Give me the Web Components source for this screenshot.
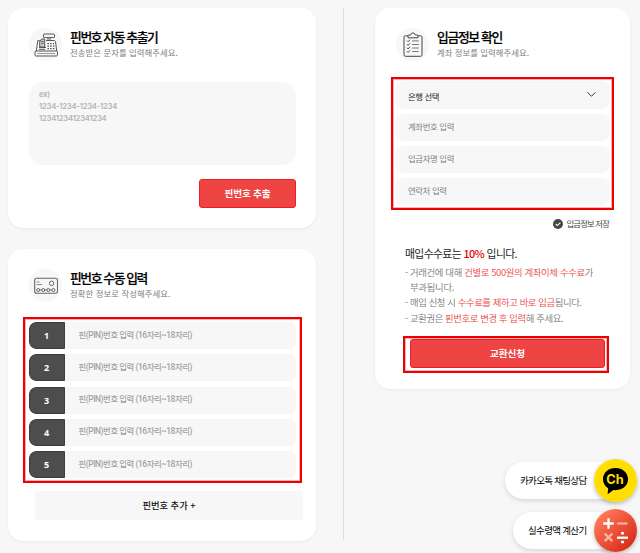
<!DOCTYPE html>
<html lang="ko">
<head>
<meta charset="utf-8">
<title>핀번호 교환</title>
<style>
html,body{margin:0;height:553px;overflow:hidden;background:#f7f7f7}
body{font-family:"Noto Sans CJK KR","Noto Sans",sans-serif;font-size:9px;color:#111}
</style>
</head>
<body>
<exchange-page></exchange-page>
<script>
const define = (name, html, setup) => {
  const tpl = document.createElement('template');
  tpl.innerHTML = html;
  customElements.define(name, class extends HTMLElement {
    connectedCallback() {
      if (this.shadowRoot) return;
      this.attachShadow({mode: 'open'}).append(tpl.content.cloneNode(true));
      if (setup) setup(this, this.shadowRoot);
    }
  });
};

/* Single line whose tracking is adjusted to span w pixels */
define('fit-text', `<style>:host{display:inline-block;white-space:nowrap;flex:none}</style><slot></slot>`, el => {
  const n = el.textContent.length;
  const natural = el.getBoundingClientRect().width;
  el.style.letterSpacing = ((+el.getAttribute('w') - natural) / n).toFixed(3) + 'px';
});

define('panel-card', `<style>
:host{display:block;box-sizing:border-box;background:#fff;border-radius:15px;padding:20px 20px 0 21px;box-shadow:0 1px 3px rgba(0,0,0,.06)}
</style><slot></slot>`);

define('card-head', `<style>
:host{display:flex;align-items:center;height:33px;gap:8px}
.ic{width:33px;height:33px;border-radius:50%;background:#f7f7f7;display:grid;place-items:center;flex:none}
.tx{display:flex;flex-direction:column;padding-bottom:2px}
.t{font-size:12.8px;font-weight:500;line-height:17px;height:17px;color:#000;-webkit-text-stroke:.2px #000}
.s{font-size:8.4px;line-height:14px;height:14px;color:#808080}
</style><div class="ic"><slot name="icon"></slot></div><div class="tx"><div class="t"><slot name="title"></slot></div><div class="s"><slot name="sub"></slot></div></div>`);

define('red-button', `<style>
:host{display:flex;align-items:center;justify-content:center;box-sizing:border-box;height:29px;padding-bottom:2px;border:1px solid #ec2024;border-radius:3px;background:#ef4444;color:#fff;font-size:9.6px;font-weight:700}
</style><slot></slot>`);

define('red-frame', `<style>
:host{display:flex;flex-direction:column;box-sizing:border-box;border:2px solid #ec0000;box-shadow:inset 0 0 0 1px rgba(236,0,0,.3)}
</style><slot></slot>`);

define('pin-row', `<style>
:host{display:flex;height:27px;border-radius:7px;overflow:hidden;background:#f7f7f7;flex:none}
.n{width:36px;background:#4d4d4d;color:#fff;display:grid;place-items:center;font:700 9px/1 "Open Sans",sans-serif;box-sizing:border-box;border:1px solid #3d3d3d;border-radius:7px 0 0 7px}
.p{padding:0 0 1px 14px;font:500 8.4px/13px Roboto,"Noto Sans CJK KR",sans-serif;color:#a2a2a2;display:flex;align-items:center}
</style><div class="n"></div><div class="p"><fit-text w="113.5">핀(PIN)번호 입력 (16자리~18자리)</fit-text></div>`, (el, r) => {
  r.querySelector('.n').textContent = el.getAttribute('n');
});

define('form-field', `<style>
:host{display:flex;align-items:center;justify-content:space-between;box-sizing:border-box;height:27px;border-radius:8px;background:#f7f7f7;padding:0 14px 2px 13px;font-size:8.4px;color:#808080;flex:none}
:host([selected]){color:#222;height:28px;padding-top:3px}
</style><slot></slot>`);

define('icon-register', `<style>:host{display:block;width:24px;height:26px}</style>
<svg width="24" height="26" viewBox="0 0 24 26" fill="none" stroke="#555" stroke-width="1">
<rect x="9.5" y="2" width="11" height="3.6" rx=".6"/><path d="M14 5.6v3M16 5.6v3M12 8.5h8.3l1.2 1 1.2 9.5M5.8 8.600h-2L2.300 19"/>
<path d="M5.700 15V9.500l2-2.500h3v8z" fill="#ccc"/><path d="M7.200 9.500h2.300M7.200 11.300h2.300M5 15.500h7M5 17.300h6"/>
<rect x="1" y="19" width="22.500" height="5" rx="1.200"/><path d="M3.500 21.500h17.500" stroke="#999"/>
<path d="M13.500 11.700h6.500M13.500 14.200h7M13.500 16.700h7" stroke="#444" stroke-width="1.300" stroke-dasharray="1.400 1.300"/></svg>`);

define('icon-card', `<style>:host{display:block;width:24px;height:18px}</style>
<svg width="24" height="18" viewBox="0 0 24 18" fill="none" stroke="#666" stroke-width="1">
<rect x=".7" y="1.200" width="22.800" height="15" rx="2" stroke-width="1.100"/><circle cx="17.600" cy="6.300" r="2.200"/>
<path d="M2.600 5h2.800M2.600 7.600h5.500" stroke="#888"/><g stroke-width="1"><circle cx="4.200" cy="13" r="1.500"/><circle cx="9.200" cy="13" r="1.500"/><circle cx="14.300" cy="13" r="1.500"/><circle cx="19.400" cy="13" r="1.500"/></g>
<path d="M5.700 13h2M10.800 13h2M15.800 13h2"/></svg>`);

define('icon-clipboard', `<style>:host{display:block;width:20px;height:26px}</style>
<svg width="20" height="26" viewBox="0 0 20 26" fill="none" stroke="#444" stroke-width="1">
<path d="M5 3.800H2.400Q1 3.800 1 5.200v17.400Q1 24.300 2.500 24.300h15Q19 24.300 19 22.600V5.200Q19 3.800 17.600 3.800H15"/>
<path d="M5 5.800V4q0-1 1-1h1.700Q8.200.9 10 .9t2.300 2.100H14q1 0 1 1v1.800Z"/>
<g stroke="#777"><path d="M9 8.900h6.800M9 12.500h6.800M9 16h6.800M9 19.500h6.800"/></g>
<path d="M4 8.600l1.100 1.100 1.900-2M4 12.200l1.100 1.100 1.900-2M4 15.800l1.100 1.100 1.900-2M4 19.300l1.100 1.100 1.900-2"/></svg>`);

define('float-pill', `<style>
:host{display:flex;align-items:center;height:43px;justify-content:flex-end}
.l{height:37px;box-sizing:border-box;border-radius:19px 0 0 19px;background:#fff;display:flex;align-items:center;margin-right:-21px;padding:0 28px 1px 15.500px;box-shadow:0 2px 5px rgba(0,0,0,.13);font-size:9.500px;color:#000}
.c{width:43px;height:43px;position:relative;border-radius:50%;box-shadow:0 2px 4px rgba(0,0,0,.25)}
</style><div class="l"><slot></slot></div><div class="c"><slot name="icon"></slot></div>`);

define('icon-talk', `<style>:host{display:grid;width:43px;height:43px;border-radius:50%;background:#ffde00}
svg,b{grid-area:1/1}
b{margin-top:11px;text-align:center;font:700 12.800px/19px Inter,sans-serif;color:#ffde00}</style>
<svg width="43" height="43" viewBox="0 0 43 43"><path fill="#000" d="M21.500 9C14.300 9 9 13.800 9 20c0 4.300 2.200 7.400 5.200 9.300L13.600 35.200l5.800-4.200C28 32 34 27 34 20.300 34 13.800 28.600 9 21.500 9z"/></svg><b>Ch</b>`);

define('icon-calc', `<style>:host{display:block;width:43px;height:43px;border-radius:50%;background:linear-gradient(135deg,#ff7858 15%,#d62b18 88%)}</style>
<svg width="43" height="43" viewBox="0 0 43 43" stroke="#fff" stroke-width="2.300" fill="none">
<path d="M9.200 14.500h10.600M14.500 9.200v10.600"/><path d="M23.200 14.500h10.300" stroke="#ffb5a6" stroke-width="2"/>
<path d="M10.700 24.500l7.600 7.600M18.300 24.500l-7.600 7.600" stroke="#ffb5a6"/><path d="M23 28.700h11"/><path d="M28.500 23v2.600M28.500 31.700v2.600" stroke-width="2.800"/></svg>`);

define('exchange-page', `<style>
:host{display:block;width:640px;height:553px;position:relative;overflow:hidden}
.page{display:grid;grid-template-columns:308px 1px 255px;padding:8px 0 0 8px;align-items:start}
.left{display:grid;grid-template-columns:308px;gap:21px}
.one{height:220px}.two{height:292px}
.rule{width:1px;height:532px;background:#ddd;margin-left:27px}
.right{height:381px;margin-left:58px;width:255px}
.area{height:83px;box-sizing:border-box;margin-top:21px;background:#f7f7f7;border-radius:14px;padding:6.500px 10px;font:600 7.700px/12px Inter,"Noto Sans CJK KR",sans-serif;color:#b4b4b4;display:flex;flex-direction:column;align-items:start}
.area fit-text{height:12px}
.go{width:97px;margin:14px 0 0 auto}
.pins{width:279px;height:166px;margin:15px 0 0 -6px;padding:3px 4px 0 3.500px;gap:5.250px}
.add{width:268px;height:29px;box-sizing:border-box;padding-bottom:1px;margin:8px 0 0 6px;background:#f7f7f7;border-radius:3px;display:flex;align-items:center;justify-content:center;font-size:9.300px;font-weight:500}
.fields{width:223px;height:133px;margin:16px 0 0 -5px;padding:2px 2px 0 2px;gap:4.900px}
.save{display:flex;align-items:center;justify-content:flex-end;gap:3.500px;height:12px;margin:7.500px 1px 0 0;font-size:8.300px;color:#444}
.save fit-text{margin-top:-2px}
.fee{margin:14.500px 0 0 9px;font-size:10.800px;line-height:18px;height:18px;color:#222}
.fee b{color:#e60000;font-weight:500}
.notes{margin:3px 0 0 9px;font-size:9.400px;color:#777;display:grid;grid-template-rows:14px 15px 16px 15px;font-weight:350}
.notes div{display:flex;align-items:center}
.notes i{font-style:normal;width:5px;flex:none}
.notes em{font-style:normal;color:#ea4545}
.submit{width:206px;height:37px;margin:10.500px 0 0 7px;padding:1.500px 2px 0 5px}
.float{position:absolute;right:3.500px;top:459px;display:grid;gap:7px}
</style>
<div class="page">
 <div class="left">
  <panel-card class="one">
   <card-head><icon-register slot="icon"></icon-register><fit-text slot="title" w="87.500">핀번호 자동 추출기</fit-text><fit-text slot="sub" w="108">전송받은 문자를 입력해주세요.</fit-text></card-head>
   <div class="area"><fit-text w="11">ex)</fit-text><fit-text w="78">1234-1234-1234-1234</fit-text><fit-text w="67.500">1234123412341234</fit-text></div>
   <red-button class="go"><fit-text w="46">핀번호 추출</fit-text></red-button>
  </panel-card>
  <panel-card class="two">
   <card-head><icon-card slot="icon"></icon-card><fit-text slot="title" w="77">핀번호 수동 입력</fit-text><fit-text slot="sub" w="100.500">정확한 정보로 작성해주세요.</fit-text></card-head>
   <red-frame class="pins"><pin-row n="1"></pin-row><pin-row n="2"></pin-row><pin-row n="3"></pin-row><pin-row n="4"></pin-row><pin-row n="5"></pin-row></red-frame>
   <div class="add"><fit-text w="53">핀번호 추가 +</fit-text></div>
  </panel-card>
 </div>
 <div class="rule"></div>
 <panel-card class="right">
  <card-head><icon-clipboard slot="icon"></icon-clipboard><fit-text slot="title" w="65">입금정보 확인</fit-text><fit-text slot="sub" w="92">계좌 정보를 입력해주세요.</fit-text></card-head>
  <red-frame class="fields">
   <form-field selected><fit-text w="31">은행 선택</fit-text><svg width="9" height="9" viewBox="0 0 9 9" fill="none" stroke="#333" style="margin-bottom:2px"><path d="M.6 2.300l3.900 4 3.900-4"/></svg></form-field>
   <form-field><fit-text w="46">계좌번호 입력</fit-text></form-field>
   <form-field><fit-text w="46">입금자명 입력</fit-text></form-field>
   <form-field><fit-text w="38.500">연락처 입력</fit-text></form-field>
  </red-frame>
  <div class="save"><svg width="10" height="10" viewBox="0 0 10 10"><circle cx="5" cy="5" r="5" fill="#444"/><path d="M2.700 5l1.700 1.600 3-3" fill="none" stroke="#fff" stroke-width="1.100"/></svg><fit-text w="42.500">입금정보 저장</fit-text></div>
  <div class="fee"><fit-text w="112">매입수수료는 <b>10%</b> 입니다.</fit-text></div>
  <div class="notes">
   <div><i>-</i><fit-text w="183">거래건에 대해 <em>건별로 500원의 계좌이체 수수료</em>가</fit-text></div>
   <div><i></i><fit-text w="44">부과됩니다.</fit-text></div>
   <div><i>-</i><fit-text w="171.500">매입 신청 시 <em>수수료를 제하고 바로 입금</em>됩니다.</fit-text></div>
   <div><i>-</i><fit-text w="153">교환권은 <em>핀번호로 변경 후 입력</em>해 주세요.</fit-text></div>
  </div>
  <red-frame class="submit"><red-button><fit-text w="35">교환신청</fit-text></red-button></red-frame>
 </panel-card>
</div>
<div class="float">
 <float-pill><fit-text w="66.500">카카오톡 채팅상담</fit-text><icon-talk slot="icon"></icon-talk></float-pill>
 <float-pill><fit-text w="58.500">실수령액 계산기</fit-text><icon-calc slot="icon"></icon-calc></float-pill>
</div>`);
</script>
</body>
</html>
